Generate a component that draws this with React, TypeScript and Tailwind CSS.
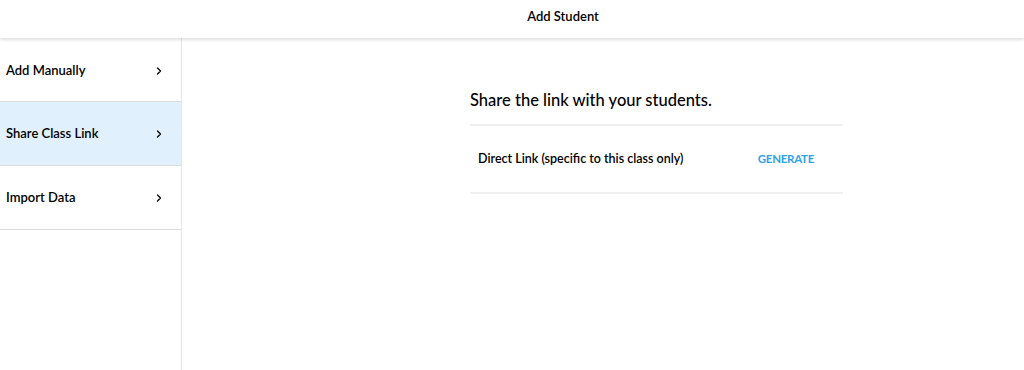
import { ChevronRight } from "lucide-react";

const items = ["Add Manually", "Share Class Link", "Import Data"];

export default function App() {
    const active = "Share Class Link";

    return (
        <div className="h-[370px] w-full bg-white text-black font-['Lato',sans-serif] overflow-hidden">
            <header className="relative z-10 h-[38px] flex items-center justify-center pl-[102px] pb-[5px] bg-white shadow-[0_1px_4px_rgba(0,0,0,0.18)]">
                <span className="text-[13px] font-semibold">Add Student</span>
            </header>

            <div className="flex h-[332px]">
                <aside className="w-[182px] shrink-0 border-r border-[#e6e6e6] pt-[2px]">
                    {items.map((item, i) => (
                        <div
                            key={item}
                            className={`${i === 0 ? "h-[62px]" : "h-[64px]"} flex items-center justify-between pl-[6px] pr-[16px] border-b border-[#dcdcdc] ${
                                item === active ? "bg-[#e0f0fc]" : "bg-white"
                            }`}
                        >
                            <span className="text-[13px] font-semibold">{item}</span>
                            <ChevronRight className="w-3 h-3" strokeWidth={2.5} />
                        </div>
                    ))}
                </aside>

                <main className="flex-1">
                    <div className="ml-[288px] w-[373px] pt-[52px]">
                        <h2 className="text-[16.5px] font-medium leading-[20px] pb-[14px] border-b-2 border-[#efefef]">
                            Share the link with your students.
                        </h2>
                        <div className="h-[68px] flex items-center justify-between pl-[8px] pr-[29px] border-b-2 border-[#efefef]">
                            <span className="text-[12.5px] font-semibold">Direct Link (specific to this class only)</span>
                            <button className="text-[11.5px] font-bold text-[#2ea3e8] tracking-tight">GENERATE</button>
                        </div>
                    </div>
                </main>
            </div>
        </div>
    );
}
